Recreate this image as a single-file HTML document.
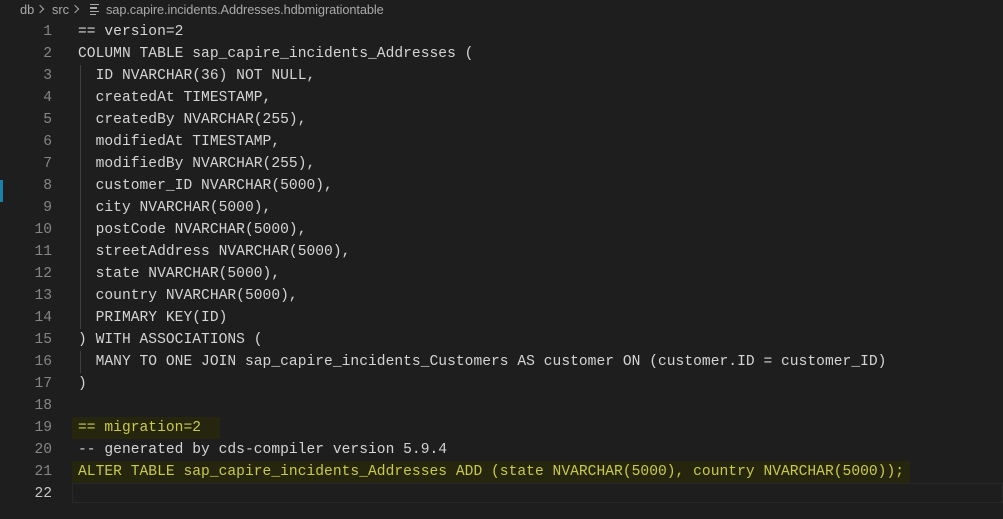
<!DOCTYPE html>
<html><head><meta charset="utf-8"><style>
body{margin:0;width:1003px;height:519px;background:#1e1e1e;overflow:hidden;position:relative;font-family:"Liberation Mono",monospace;}
.bc{position:absolute;top:0;height:20px;line-height:20px;font-family:"Liberation Sans",sans-serif;font-size:12.8px;color:#a9a9a9;white-space:nowrap}
.chev{position:absolute;top:6px;width:5px;height:5px;border-right:1.2px solid #a9a9a9;border-top:1.2px solid #a9a9a9;transform:rotate(45deg)}
.ic{position:absolute;left:90px;top:4px;width:9px}
.ic i{display:block;height:1.3px;background:#a9a9a9;margin:0 0 2px}
.ln{position:absolute;left:0;width:52px;text-align:right;color:#858585;font-size:14.6px;height:22px;line-height:22px}
.code{position:absolute;left:78px;font-size:14.6px;color:#d4d4d4;height:22px;line-height:22px;white-space:pre}
.hl{position:absolute;background:#26260f;height:22px}
.y{color:#c9c94a}
.guide{position:absolute;left:80px;width:1px;background:#404040}
</style></head><body>
<div class="bc" style="left:20px">db</div>
<div class="chev" style="left:37px"></div>
<div class="bc" style="left:52px">src</div>
<div class="chev" style="left:72px"></div>
<div class="ic"><i></i><i style="width:7px"></i><i></i><i style="width:6px"></i></div>
<div class="bc" style="left:106px;letter-spacing:-0.1px">sap.capire.incidents.Addresses.hdbmigrationtable</div>
<div style="position:absolute;left:0;top:180px;width:3px;height:22px;background:#1b81a8"></div>
<div class="guide" style="top:65px;height:264px"></div>
<div class="guide" style="top:351px;height:22px"></div>
<div class="hl" style="left:72px;top:417px;width:148px"></div>
<div class="hl" style="left:72px;top:461px;width:838px"></div>
<div style="position:absolute;left:72px;top:483px;width:931px;height:20px;border:1px solid #282828;box-sizing:border-box"></div>
<div id="c"></div>
<script>
var L=["== version=2","COLUMN TABLE sap_capire_incidents_Addresses (","  ID NVARCHAR(36) NOT NULL,","  createdAt TIMESTAMP,","  createdBy NVARCHAR(255),","  modifiedAt TIMESTAMP,","  modifiedBy NVARCHAR(255),","  customer_ID NVARCHAR(5000),","  city NVARCHAR(5000),","  postCode NVARCHAR(5000),","  streetAddress NVARCHAR(5000),","  state NVARCHAR(5000),","  country NVARCHAR(5000),","  PRIMARY KEY(ID)",") WITH ASSOCIATIONS (","  MANY TO ONE JOIN sap_capire_incidents_Customers AS customer ON (customer.ID = customer_ID)",")","","== migration=2","-- generated by cds-compiler version 5.9.4","ALTER TABLE sap_capire_incidents_Addresses ADD (state NVARCHAR(5000), country NVARCHAR(5000));",""];
var h="";for(var i=0;i<L.length;i++){var t=21+i*22;
h+='<div class="ln" style="top:'+t+'px;'+(i==21?'color:#c6c6c6':'')+'">'+(i+1)+'</div>';
var s=L[i].replace(/&/g,'&amp;').replace(/</g,'&lt;');
h+='<div class="code'+((i==18||i==20)?' y':'')+'" style="top:'+t+'px;letter-spacing:0.03px">'+s+'</div>';}
document.getElementById('c').innerHTML=h;
</script>
</body></html>
